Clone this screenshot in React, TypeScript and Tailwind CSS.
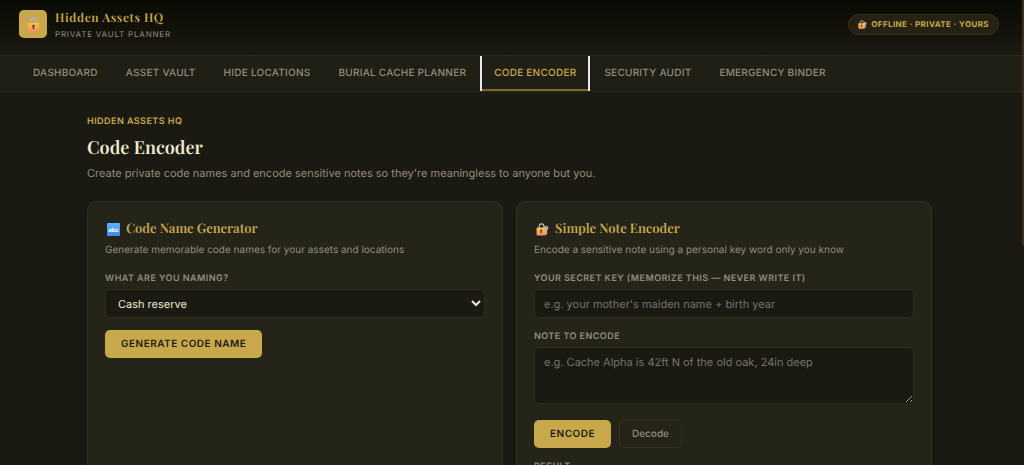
import { useState, ReactNode } from 'react';
import { clsx } from 'clsx';

const TABS = [
  'Dashboard',
  'Asset Vault',
  'Hide Locations',
  'Burial Cache Planner',
  'Code Encoder',
  'Security Audit',
  'Emergency Binder',
];

const SERIF = "font-['Playfair_Display','Liberation_Serif',serif]";
const FIELD =
  'block w-full rounded-[5px] border border-[#2f2d1a] bg-[#1a1a12] text-[11px] text-[#f0e8d2] placeholder:text-[#75736d] outline-none';
const PRIMARY =
  'h-7 rounded-[5px] bg-[#c9a84c] px-4 text-[10px] font-semibold uppercase tracking-wider text-[#1a1a12]';

function LockIcon({ className }: { className?: string }) {
  return (
    <svg viewBox="0 0 24 24" className={className} aria-hidden="true">
      <defs>
        <linearGradient id="lockBody" x1="0" y1="0" x2="0" y2="1">
          <stop offset="0" stopColor="#fdc63c" />
          <stop offset="1" stopColor="#f98a5a" />
        </linearGradient>
      </defs>
      <path d="M7 8V6.500a5 5 0 0 1 10 0v4" fill="none" stroke="#b5b0bd" strokeWidth="2.400" />
      <rect x="3" y="9.500" width="18" height="13.500" rx="1.600" fill="url(#lockBody)" />
      <path d="M12 12.600a2 2 0 0 1 1.100 3.700v3.200h-2.200v-3.200a2 2 0 0 1 1.100-3.700z" fill="#433b6b" />
    </svg>
  );
}

function LockKeyIcon({ className }: { className?: string }) {
  return (
    <svg viewBox="0 0 24 24" className={className} aria-hidden="true">
      <defs>
        <linearGradient id="lockKeyBody" x1="0" y1="0" x2="0" y2="1">
          <stop offset="0" stopColor="#fdc63c" />
          <stop offset="1" stopColor="#f98a5a" />
        </linearGradient>
      </defs>
      <path d="M6 10V6a4.300 4.300 0 0 1 8.600 0v4" fill="none" stroke="#bdb9cc" strokeWidth="2.200" />
      <path
        d="M19 5.200a3.900 3.900 0 0 1 1.700 7.400v7.200l-2 2.400-1.800-1.900V12.600A3.900 3.900 0 0 1 19 5.200z"
        fill="#b9b2d3"
      />
      <circle cx="19.200" cy="8" r="1" fill="#57506f" />
      <rect x="1" y="8.500" width="17" height="14.500" rx="1.600" fill="url(#lockKeyBody)" />
      <path d="M9.500 12a2 2 0 0 1 1.100 3.700v3.400H8.400v-3.400A2 2 0 0 1 9.500 12z" fill="#433b6b" />
    </svg>
  );
}

function LettersIcon({ className }: { className?: string }) {
  return (
    <svg viewBox="0 0 24 24" className={className} aria-hidden="true">
      <defs>
        <linearGradient id="lettersBg" x1="0" y1="0" x2="0" y2="1">
          <stop offset="0" stopColor="#5ab4fb" />
          <stop offset="1" stopColor="#4287ee" />
        </linearGradient>
      </defs>
      <rect width="24" height="24" rx="1.500" fill="url(#lettersBg)" />
      <text x="12" y="16" textAnchor="middle" fontSize="11" fontWeight="700" fontFamily="Inter, sans-serif" fill="#fff">
        abc
      </text>
    </svg>
  );
}

interface CardProps {
  icon: ReactNode;
  title: string;
  text: string;
  children: ReactNode;
}

function Card({ icon, title, text, children }: CardProps) {
  return (
    <section className="rounded-[9px] border border-[#302f1b] bg-[#242419] p-[17px]">
      <h2 className={clsx(SERIF, 'flex items-center gap-[5px] text-[13px] leading-5 font-semibold text-[#c9a84c]')}>
        <span className="flex w-4 justify-center">{icon}</span>
        {title}
      </h2>
      <p className="mt-[3px] text-[10px] leading-4 text-[#958c7a]">{text}</p>
      {children}
    </section>
  );
}

function Label({ htmlFor, className, children }: { htmlFor: string; className?: string; children: ReactNode }) {
  return (
    <label
      htmlFor={htmlFor}
      className={clsx('block text-[9px] leading-4 font-semibold uppercase tracking-wider text-[#958c7a]', className)}
    >
      {children}
    </label>
  );
}

function App() {
  const [tab, setTab] = useState('Code Encoder');

  return (
    <div className="h-screen overflow-y-auto bg-[#1a1a12] font-['Inter',sans-serif] text-[#f0e8d2] [scrollbar-width:none] [text-rendering:geometricPrecision] [&_*]:[text-rendering:inherit]">
      <header className="flex items-center justify-between bg-linear-to-b from-[#0a0a05] to-[#1a1a12] pt-2 pr-[25px] pb-[15px] pl-[19px]">
        <div className="flex items-center gap-2">
          <div className="flex h-7 w-7 items-center justify-center rounded-[5px] bg-[#c9a84c]">
            <LockIcon className="h-[15px] w-[15px]" />
          </div>
          <div>
            <div className={clsx(SERIF, 'text-[12px] leading-5 font-semibold tracking-wider text-[#c9a84c]')}>
              Hidden Assets HQ
            </div>
            <div className="text-[8px] leading-3 uppercase tracking-widest text-[#958c7a]">Private Vault Planner</div>
          </div>
        </div>
        <div className="flex h-[21px] items-center gap-1 rounded-full border border-[#37301a] bg-[#262213] px-[9px] text-[8px] font-bold uppercase tracking-wider text-[#c9a84c]">
          <LockKeyIcon className="h-[9px] w-[9px]" />
          Offline · Private · Yours
        </div>
      </header>

      <nav className="flex h-[37px] border-y border-[#2b2a19] bg-[#1f1f16] px-[19px]">
        {TABS.map((name) => (
          <button
            key={name}
            type="button"
            onClick={() => setTab(name)}
            className={clsx(
              'border-x-2 px-3 text-[10px] font-medium whitespace-nowrap uppercase tracking-wide outline-none',
              name === tab
                ? 'border-x-[#e8e8e8] text-[#c9a84c] shadow-[inset_0_-2px_0_#80652b]'
                : 'border-x-transparent text-[#958c7a]'
            )}
          >
            {name}
          </button>
        ))}
      </nav>

      <main className="mx-auto max-w-[850px] pt-[22px] pr-[5px] pb-10">
        <p className="text-[9px] leading-4 font-semibold uppercase tracking-wider text-[#c9a84c]">Hidden Assets HQ</p>
        <h1 className={clsx(SERIF, 'mt-[3px] text-[18px] leading-7 font-semibold')}>Code Encoder</h1>
        <p className="mt-1 text-[11px] leading-4 text-[#958c7a]">
          Create private code names and encode sensitive notes so they're meaningless to anyone but you.
        </p>

        <div className="mt-5 grid grid-cols-2 gap-[13px]">
          <Card
            icon={<LettersIcon className="h-[13px] w-[13px]" />}
            title="Code Name Generator"
            text="Generate memorable code names for your assets and locations"
          >
            <Label htmlFor="naming" className="mt-[13px]">
              What are you naming?
            </Label>
            <select id="naming" className={clsx(FIELD, 'mt-[2px] h-[29px] px-2')}>
              <option>Cash reserve</option>
            </select>
            <button type="button" className={clsx(PRIMARY, 'mt-3')}>
              Generate Code Name
            </button>
          </Card>

          <Card
            icon={<LockKeyIcon className="h-[13px] w-[13px]" />}
            title="Simple Note Encoder"
            text="Encode a sensitive note using a personal key word only you know"
          >
            <Label htmlFor="key" className="mt-[13px]">
              Your secret key (memorize this — never write it)
            </Label>
            <input
              id="key"
              type="text"
              placeholder="e.g. your mother's maiden name + birth year"
              className={clsx(FIELD, 'mt-[2px] h-[29px] px-[9px]')}
            />
            <Label htmlFor="note" className="mt-[11px]">
              Note to encode
            </Label>
            <textarea
              id="note"
              placeholder="e.g. Cache Alpha is 42ft N of the old oak, 24in deep"
              className={clsx(FIELD, 'mt-[2px] h-[57px] resize-y px-[9px] py-[6px] leading-4')}
            />
            <div className="mt-4 flex gap-2">
              <button type="button" className={PRIMARY}>
                Encode
              </button>
              <button
                type="button"
                className="h-7 rounded-[5px] border border-[#352e1a] px-3 text-[10px] font-medium text-[#958c7a]"
              >
                Decode
              </button>
            </div>
            <Label htmlFor="result" className="mt-[11px]">
              Result
            </Label>
            <output id="result" className={clsx(FIELD, 'mt-[2px] h-[57px]')} />
          </Card>
        </div>
      </main>

      {/* scroll position marker */}
      <div className="fixed top-0 right-0 h-[53vh] w-[2px] rounded-b-sm bg-[#3b3119]" />
    </div>
  );
}

export default App;
